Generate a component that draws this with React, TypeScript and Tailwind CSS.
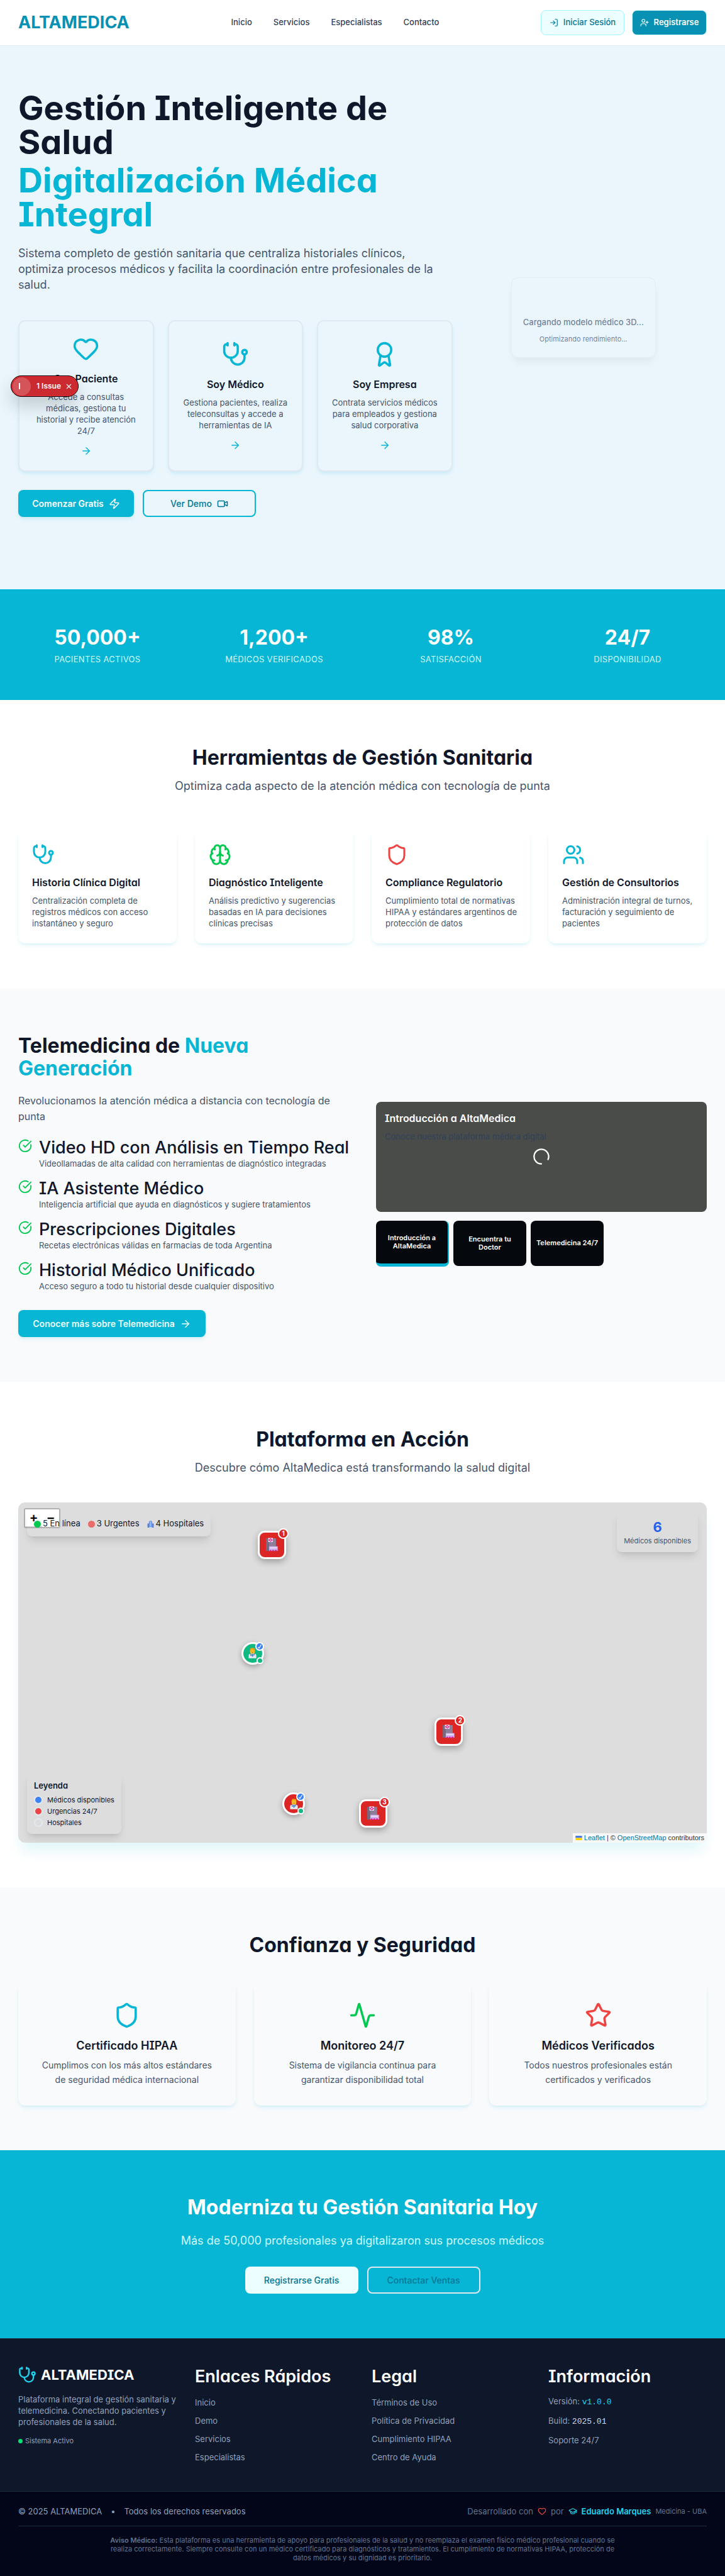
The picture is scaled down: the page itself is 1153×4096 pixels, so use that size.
import React from "react";
import {
  Activity,
  ArrowRight,
  Award,
  Brain,
  CircleCheckBig,
  GraduationCap,
  Heart,
  LogIn,
  Shield,
  Star,
  Stethoscope,
  UserPlus,
  Users,
  Video,
  X,
  Zap,
} from "lucide-react";

const display = "[font-feature-settings:'cv08','cv11']";
const softShadow = "shadow-[0_4px_6px_-1px_rgba(6,182,212,0.12),0_2px_4px_-2px_rgba(6,182,212,0.1)]";
const panelShadow = "shadow-[0_9px_14px_-3px_rgba(0,0,0,0.12),0_4px_6px_-4px_rgba(0,0,0,0.1)]";

function Header() {
  return (
    <header className="flex h-[73px] items-center justify-between border-b border-slate-200 bg-white px-[29px]">
      <a href="#inicio" className="text-[27px] font-bold leading-8 text-[#0891b2]">
        ALTAMEDICA
      </a>
      <nav className="flex gap-[34px] text-[13px] font-medium text-slate-700">
        <a href="#inicio">Inicio</a>
        <a href="#servicios">Servicios</a>
        <a href="#especialistas">Especialistas</a>
        <a href="#contacto">Contacto</a>
      </nav>
      <div className="flex gap-3">
        <button className="flex h-10 w-[133px] items-center justify-center gap-2 rounded-lg border border-cyan-200 bg-cyan-50 text-[13px] font-medium text-cyan-700">
          <LogIn size={14} />
          Iniciar Sesión
        </button>
        <button className="flex h-10 w-[119px] items-center justify-center gap-2 rounded-lg border border-cyan-100 bg-[#0891b2] text-[13px] font-semibold text-white">
          <UserPlus size={14} />
          Registrarse
        </button>
      </div>
    </header>
  );
}

const roles = [
  { icon: Heart, title: "Soy Paciente", text: "Accede a consultas médicas, gestiona tu historial y recibe atención 24/7" },
  { icon: Stethoscope, title: "Soy Médico", text: "Gestiona pacientes, realiza teleconsultas y accede a herramientas de IA" },
  { icon: Award, title: "Soy Empresa", text: "Contrata servicios médicos para empleados y gestiona salud corporativa" },
];

function Hero() {
  return (
    <section className="grid grid-cols-[1.76fr_1fr] items-center gap-3 bg-[#eaf6fc] px-[29px] py-[72px]">
      <div className="pb-[43px]">
        <h1 className={`text-[54px] font-bold leading-[54px] text-slate-900 ${display}`}>
          Gestión Inteligente de Salud
          <span className="mt-[7px] block text-[#06b6d4]">Digitalización Médica Integral</span>
        </h1>
        <p className="mt-[22px] text-[18px] leading-[25px] text-slate-600">
          Sistema completo de gestión sanitaria que centraliza historiales clínicos, optimiza procesos médicos y
          facilita la coordinación entre profesionales de la salud.
        </p>
        <div className="mt-11 grid grid-cols-3 gap-[22px]">
          {roles.map(({ icon: Icon, title, text }) => (
            <a
              key={title}
              href="#registro"
              className={`flex flex-col items-center justify-center rounded-[11px] border-2 border-slate-200 bg-[#eaf6fc] px-[18px] py-[22px] text-center ${softShadow}`}
            >
              <Icon size={43} className="text-[#06b6d4]" />
              <h3 className={`mt-[14px] text-[16px] font-semibold leading-[25px] text-slate-900 ${display}`}>{title}</h3>
              <p className="mt-[7px] text-[13px] leading-[18px] text-slate-600">{text}</p>
              <ArrowRight size={18} className="mt-[14px] text-[#06b6d4]" />
            </a>
          ))}
        </div>
        <div className="mt-[29px] flex gap-[14px]">
          <button
            className={`flex h-[43px] w-[184px] items-center justify-center gap-2 rounded-lg bg-[#06b6d4] text-[14px] font-semibold text-white ${softShadow}`}
          >
            Comenzar Gratis
            <Zap size={18} />
          </button>
          <button className="flex h-[43px] w-[180px] items-center justify-center gap-2 rounded-lg border-2 border-[#06b6d4] text-[14px] font-medium text-cyan-700">
            Ver Demo
            <Video size={18} />
          </button>
        </div>
      </div>
      <div className="flex justify-center">
        <div className="flex h-32 w-[230px] flex-col items-center justify-end rounded-[11px] border border-slate-200/70 bg-[#eaf6fc] pb-[22px] shadow-[0_9px_14px_-3px_rgba(0,0,0,0.06)]">
          <p className="text-[13px] font-medium leading-[18px] text-slate-500/90">Cargando modelo médico 3D...</p>
          <p className="mt-[11px] text-[11px] leading-[14px] text-slate-500/90">Optimizando rendimiento...</p>
        </div>
      </div>
    </section>
  );
}

const stats = [
  ["50,000+", "Pacientes activos"],
  ["1,200+", "Médicos verificados"],
  ["98%", "Satisfacción"],
  ["24/7", "Disponibilidad"],
];

function Stats() {
  return (
    <section className="grid grid-cols-4 gap-[29px] bg-[#06b6d4] px-[29px] pb-[56px] pt-[59px] text-center">
      {stats.map(([value, label]) => (
        <div key={label}>
          <div className={`text-[32px] font-bold leading-9 text-white ${display}`}>{value}</div>
          <div className="mt-[7px] text-[13px] uppercase leading-[18px] tracking-wide text-cyan-100">{label}</div>
        </div>
      ))}
    </section>
  );
}

function SectionTitle({ title, text }: { title: string; text?: string }) {
  return (
    <div className="text-center">
      <h2 className={`text-[32px] font-bold leading-[37px] text-slate-900 ${display}`}>{title}</h2>
      {text && <p className="mt-[14px] text-[18px] leading-[25px] text-slate-600">{text}</p>}
    </div>
  );
}

const tools = [
  { icon: Stethoscope, color: "text-[#06b6d4]", title: "Historia Clínica Digital", text: "Centralización completa de registros médicos con acceso instantáneo y seguro" },
  { icon: Brain, color: "text-green-500", title: "Diagnóstico Inteligente", text: "Análisis predictivo y sugerencias basadas en IA para decisiones clínicas precisas" },
  { icon: Shield, color: "text-[#ef4444]", title: "Compliance Regulatorio", text: "Cumplimiento total de normativas HIPAA y estándares argentinos de protección de datos" },
  { icon: Users, color: "text-[#06b6d4]", title: "Gestión de Consultorios", text: "Administración integral de turnos, facturación y seguimiento de pacientes" },
];

function Tools() {
  return (
    <section id="servicios" className="bg-white px-[29px] pb-[72px] pt-[73px]">
      <SectionTitle title="Herramientas de Gestión Sanitaria" text="Optimiza cada aspecto de la atención médica con tecnología de punta" />
      <div className="mt-[57px] grid grid-cols-4 gap-[29px]">
        {tools.map(({ icon: Icon, color, title, text }) => (
          <article key={title} className={`rounded-[11px] bg-white pb-[23px] pl-[22px] pr-[14px] pt-[22px] ${softShadow}`}>
            <Icon size={36} className={color} />
            <h3 className={`mt-[14px] text-[16px] font-semibold leading-[25px] text-slate-900 ${display}`}>{title}</h3>
            <p className="mt-[7px] text-[13px] leading-[18px] text-slate-600">{text}</p>
          </article>
        ))}
      </div>
    </section>
  );
}

const teleFeatures = [
  ["Video HD con Análisis en Tiempo Real", "Videollamadas de alta calidad con herramientas de diagnóstico integradas"],
  ["IA Asistente Médico", "Inteligencia artificial que ayuda en diagnósticos y sugiere tratamientos"],
  ["Prescripciones Digitales", "Recetas electrónicas válidas en farmacias de toda Argentina"],
  ["Historial Médico Unificado", "Acceso seguro a todo tu historial desde cualquier dispositivo"],
];

function Telemedicine() {
  return (
    <section className="grid grid-cols-2 items-center gap-[43px] bg-slate-50 px-[29px] pb-[71px] pt-[73px]">
      <div>
        <h2 className={`text-[32px] font-bold leading-9 text-slate-900 ${display}`}>
          Telemedicina de <span className="text-[#06b6d4]">Nueva Generación</span>
        </h2>
        <p className="mt-[21px] text-[16px] leading-[25px] text-slate-600">
          Revolucionamos la atención médica a distancia con tecnología de punta
        </p>
        <ul className="mt-[21px] flex flex-col gap-[15px]">
          {teleFeatures.map(([title, text]) => (
            <li key={title} className="flex items-start gap-[11px]">
              <CircleCheckBig size={22} className="mt-0.5 shrink-0 text-green-500" />
              <div>
                <h3 className={`whitespace-nowrap text-[27px] font-medium leading-8 text-slate-900 ${display}`}>{title}</h3>
                <p className="text-[13px] leading-[18px] text-slate-600">{text}</p>
              </div>
            </li>
          ))}
        </ul>
        <button
          className={`mt-[29px] flex h-[43px] w-[298px] items-center justify-center gap-2 rounded-lg bg-[#06b6d4] text-[14px] font-semibold text-cyan-50 ${softShadow}`}
        >
          Conocer más sobre Telemedicina
          <ArrowRight size={18} />
        </button>
      </div>
      <div className="pb-[6px]">
        <div className="relative h-[175px] rounded-lg bg-[#4a4c4a] px-[14px] pt-[14px]">
          <h3 className={`text-[16px] font-semibold leading-[25px] text-white ${display}`}>Introducción a AltaMedica</h3>
          <p className="mt-[7px] text-[13px] leading-[18px] text-slate-700">Conoce nuestra plataforma médica digital</p>
          <svg viewBox="0 0 28 28" className="absolute left-1/2 top-1/2 size-[26px] -translate-x-1/2 -translate-y-1/2" fill="none" stroke="#fff" strokeWidth="2.5" strokeLinecap="round">
            <path d="M14 26.5A12.5 12.5 0 1 1 25.4 19" />
          </svg>
        </div>
        <div className="mt-[14px] flex gap-[7px] text-[11px] font-semibold leading-[13px] text-white">
          <button className="h-[73px] w-[116px] rounded-lg border-b-[5px] border-r-2 border-[#06b6d4] bg-[#05080c] px-2">
            Introducción a AltaMedica
          </button>
          <button className="h-[72px] w-[116px] rounded-lg bg-[#05080c] px-5">Encuentra tu Doctor</button>
          <button className="h-[72px] w-[116px] whitespace-nowrap rounded-lg bg-[#05080c]">Telemedicina 24/7</button>
        </div>
      </div>
    </section>
  );
}

function HospitalMarker({ place, count }: { place: string; count: number }) {
  return (
    <div className={`absolute flex size-[45px] items-center justify-center rounded-[11px] border-[3px] border-white bg-[#dc2626] shadow-[0_4px_11px_rgba(0,0,0,0.3)] ${place}`}>
      <svg viewBox="0 0 20 24" className="h-[22px] w-[19px]" role="img" aria-label="Hospital">
        <rect x="0" y="1" width="17" height="22" rx="1" fill="#8d7f99" />
        <rect x="0" y="1" width="5" height="22" fill="#75697f" />
        <rect x="3.500" y="0.500" width="8" height="7" fill="#f5e6ff" />
        <path d="M4.500 4 7.500 1.800 10.500 4 7.500 6.200Z" fill="none" stroke="#e3197b" strokeWidth="1.300" />
        <rect x="5" y="15" width="15" height="8" fill="#cfb3ee" />
        <path d="M6.500 17.500h12" stroke="#f7efff" strokeWidth="1.400" />
        <path d="M6 22.300h3m1.500 0h3m1.500 0h3.500" stroke="#d61fa8" strokeWidth="1.800" />
      </svg>
      <span className="absolute -right-[7px] -top-[7px] flex size-[17px] items-center justify-center rounded-full border-2 border-white bg-[#dc2626] text-[10px] font-bold leading-none text-white">
        {count}
      </span>
    </div>
  );
}

function DoctorMarker({ place }: { place: string }) {
  return (
    <div className={`absolute flex size-9 items-center justify-center rounded-full border-[3px] border-white shadow-[0_3px_9px_rgba(0,0,0,0.3)] ${place}`}>
      <svg viewBox="0 0 14 18" className="h-[17px] w-[13px]" role="img" aria-label="Médico">
        <path d="M0.500 18v-4.500q0-3 3-3.500l3.500-.5 3.500.5q3 .5 3 3.500V18Z" fill="#e6ebf5" />
        <path d="M5 10h4v3l-2 3-2-3Z" fill="#5b8fd0" />
        <path d="M4 10v4M10 10v3" stroke="#4b5b78" strokeWidth="1" />
        <rect x="3" y="1" width="8" height="9" rx="3.500" fill="#fcc02e" />
        <path d="M3 5V3q0-3 4-3t4 3v1Q7 4 6 2.500 5 4 3 5Z" fill="#f0a30c" />
        <path d="M5.500 5.200v.8M8.500 5.200v.8M6 8h2" stroke="#7a4a10" strokeWidth=".8" />
      </svg>
      <span className="absolute -right-[3px] -top-[3px] flex size-[14px] items-center justify-center rounded-full border-2 border-white bg-[#3b82f6]">
        <svg viewBox="0 0 8 8" className="size-2" fill="none" stroke="#fff" strokeWidth="1.200">
          <path d="M1.500 5 3 6.800 6.500 1" />
        </svg>
      </span>
      <span className="absolute -bottom-0.5 -right-0.5 size-[11px] rounded-full border-2 border-white bg-[#10b981]" />
    </div>
  );
}

function PlatformMap() {
  return (
    <section className="bg-white px-[29px] pb-[71px] pt-[73px]">
      <SectionTitle title="Plataforma en Acción" text="Descubre cómo AltaMedica está transformando la salud digital" />
      <div className="relative mt-[43px] h-[541px] overflow-hidden rounded-[11px] bg-[#ddd] shadow-[0_18px_22px_-5px_rgba(6,182,212,0.12)]">
        <div className="absolute left-[9px] top-[9px] flex h-[32px] w-[58px] rounded-[3px] border-2 border-black/20 bg-clip-padding font-['Liberation_Sans',sans-serif] text-[20px] font-bold leading-[26px] text-black">
          <button aria-label="Acercar" className="w-1/2 border-b border-[#ccc] bg-white">+</button>
          <button aria-label="Alejar" className="w-1/2 bg-white">−</button>
        </div>

        <HospitalMarker place="left-[34.800%] top-[8.300%]" count={1} />
        <DoctorMarker place="left-[32.400%] top-[41%] bg-[#10b981]" />
        <HospitalMarker place="left-[60.500%] top-[63.200%]" count={2} />
        <DoctorMarker place="left-[38.400%] top-[85.300%] bg-[#dc2626]" />
        <HospitalMarker place="left-[49.500%] top-[87.200%]" count={3} />

        <div className={`absolute left-[14px] top-[14px] flex h-10 items-center gap-3 rounded-lg px-[11px] text-[13px] text-slate-900 ${panelShadow}`}>
          <span className="flex items-center gap-[3px]">
            <span className="size-[11px] rounded-full bg-green-500" />5 En línea
          </span>
          <span className="flex items-center gap-[3px]">
            <span className="size-[11px] rounded-full bg-[#ec6b6b]" />3 Urgentes
          </span>
          <span className="flex items-center gap-[3px]">
            <svg viewBox="0 0 12 12" className="size-[11px]">
              <path d="M3 12V3q0-3 3-3t3 3v9Z" fill="#6f9bea" />
              <path d="M1 5h2v7H1q-1-1 0-2-1-1 0-2-1-1 0-3ZM9 5h2q1 2 0 3 1 1 0 2 1 1 0 2H9Z" fill="#3f74e0" />
              <path d="M6 1.500V10M3.800 11.500h4.400" stroke="#c4d6f7" strokeWidth="1" />
            </svg>
            4 Hospitales
          </span>
        </div>

        <div className={`absolute right-[14px] top-[14px] rounded-lg p-[11px] text-center ${panelShadow}`}>
          <div className="text-[22px] font-bold leading-[29px] text-[#2563eb]">6</div>
          <div className="text-[11px] leading-[14px] text-slate-600">Médicos disponibles</div>
        </div>

        <div className={`absolute bottom-[14px] left-[14px] rounded-lg p-[11px] ${panelShadow}`}>
          <h4 className={`text-[13px] font-semibold leading-[18px] text-slate-900 ${display}`}>Leyenda</h4>
          <ul className="mt-[7px] flex flex-col gap-1 text-[11px] leading-[14px] text-slate-900">
            <li className="flex items-center gap-[7px]">
              <span className="size-[14px] rounded-full border-2 border-slate-200 bg-[#3b82f6]" />
              Médicos disponibles
            </li>
            <li className="flex items-center gap-[7px]">
              <span className="size-[14px] rounded-full border-2 border-slate-200 bg-[#ef4444]" />
              Urgencias 24/7
            </li>
            <li className="flex items-center gap-[7px]">
              <span className="size-[14px] rounded-full border-2 border-slate-200" />
              Hospitales
            </li>
          </ul>
        </div>

        <div className="absolute bottom-0 right-0 flex h-[15px] items-center gap-[3px] bg-white/80 px-1 font-['Liberation_Sans',sans-serif] text-[11px] text-[#333]">
          <svg viewBox="0 0 12 8" className="h-[7px] w-[11px]">
            <path fill="#4C7BE1" d="M0 0h12v4H0z" />
            <path fill="#FFD500" d="M0 4h12v4H0z" />
          </svg>
          <a href="#leaflet" className="text-[#0078a8]">Leaflet</a>
          <span>|</span>
          <span>©</span>
          <a href="#openstreetmap" className="text-[#0078a8]">OpenStreetMap</a>
          <span>contributors</span>
        </div>
      </div>
    </section>
  );
}

const trust = [
  { icon: Shield, color: "text-[#06b6d4]", title: "Certificado HIPAA", text: "Cumplimos con los más altos estándares de seguridad médica internacional" },
  { icon: Activity, color: "text-green-500", title: "Monitoreo 24/7", text: "Sistema de vigilancia continua para garantizar disponibilidad total" },
  { icon: Star, color: "text-[#ef4444]", title: "Médicos Verificados", text: "Todos nuestros profesionales están certificados y verificados" },
];

function Trust() {
  return (
    <section className="bg-slate-50 px-[29px] pb-[71px] pt-[73px]">
      <SectionTitle title="Confianza y Seguridad" />
      <div className="mt-[42px] grid grid-cols-3 gap-[29px]">
        {trust.map(({ icon: Icon, color, title, text }) => (
          <article key={title} className={`flex flex-col items-center rounded-[11px] bg-slate-50 px-[29px] py-[30px] text-center ${softShadow}`}>
            <Icon size={43} className={color} />
            <h3 className={`mt-[14px] text-[18px] font-semibold leading-[25px] text-slate-900 ${display}`}>{title}</h3>
            <p className="mt-[7px] text-[14px] leading-[23px] text-slate-600">{text}</p>
          </article>
        ))}
      </div>
    </section>
  );
}

function CallToAction() {
  return (
    <section className="bg-[#06b6d4] px-[29px] pb-[71px] pt-[72px] text-center">
      <h2 className={`text-[32px] font-bold leading-[37px] text-white ${display}`}>Moderniza tu Gestión Sanitaria Hoy</h2>
      <p className="mt-[22px] text-[18px] leading-[25px] text-cyan-100">
        Más de 50,000 profesionales ya digitalizaron sus procesos médicos
      </p>
      <div className="mt-[29px] flex justify-center gap-[14px] text-[14px] font-medium text-cyan-700">
        <button className="h-[43px] w-[180px] rounded-lg bg-cyan-50">Registrarse Gratis</button>
        <button className="h-[43px] w-[180px] rounded-lg border-2 border-slate-200">Contactar Ventas</button>
      </div>
    </section>
  );
}

function LinkColumn({ title, links }: { title: string; links: string[] }) {
  return (
    <div>
      <h3 className={`whitespace-nowrap text-[27px] font-semibold leading-[34px] text-white ${display}`}>{title}</h3>
      <ul className="mt-[13px] flex flex-col gap-[7px] text-[13px] leading-[22px] text-slate-400">
        {links.map((link) => (
          <li key={link}>
            <a href="#enlace">{link}</a>
          </li>
        ))}
      </ul>
    </div>
  );
}

function Footer() {
  return (
    <footer id="contacto">
      <div className="grid grid-cols-4 gap-[29px] border-t border-slate-800 bg-slate-900 px-[29px] py-[43px]">
        <div>
          <div className="flex items-center gap-[7px]">
            <Stethoscope size={29} className="text-[#22d3ee]" />
            <span className={`text-[22px] font-bold leading-[29px] text-white ${display}`}>ALTAMEDICA</span>
          </div>
          <p className="mt-[15px] text-[13px] leading-[18px] text-slate-400">
            Plataforma integral de gestión sanitaria y telemedicina. Conectando pacientes y profesionales de la salud.
          </p>
          <p className="mt-[14px] flex items-center gap-1 text-[11px] leading-[14px] text-slate-400">
            <span className="size-[7px] rounded-full bg-green-400" />
            Sistema Activo
          </p>
        </div>
        <LinkColumn title="Enlaces Rápidos" links={["Inicio", "Demo", "Servicios", "Especialistas"]} />
        <LinkColumn title="Legal" links={["Términos de Uso", "Política de Privacidad", "Cumplimiento HIPAA", "Centro de Ayuda"]} />
        <div>
          <h3 className={`text-[27px] font-semibold leading-[34px] text-white ${display}`}>Información</h3>
          <ul className="mt-[13px] flex flex-col gap-[11px] text-[13px] leading-[19px] text-slate-400">
            <li>
              Versión: <span className="font-['Liberation_Mono',monospace] text-[#22d3ee]">v1.0.0</span>
            </li>
            <li>
              Build: <span className="font-['Liberation_Mono',monospace] text-slate-300">2025.01</span>
            </li>
            <li>Soporte 24/7</li>
          </ul>
        </div>
      </div>
      <div className="border-t border-slate-800 bg-slate-950 px-[29px] pb-[22px] pt-[22px]">
        <div className="flex items-center justify-between text-[13px] leading-[18px]">
          <div className="flex gap-[14px] text-slate-400">
            <span>© 2025 ALTAMEDICA</span>
            <span>•</span>
            <span>Todos los derechos reservados</span>
          </div>
          <div className="flex items-center gap-[7px] text-slate-500">
            <span>Desarrollado con</span>
            <Heart size={14} className="text-[#ef4444]" />
            <span>por</span>
            <a href="#autor" className="flex items-center gap-[7px] font-semibold text-[#22d3ee]">
              <GraduationCap size={14} />
              Eduardo Marques
            </a>
            <span className="text-[11px]">Medicina - UBA</span>
          </div>
        </div>
        <div className="mt-[14px] border-t border-slate-800 pt-[15px]">
          <p className="mx-auto max-w-[807px] text-center text-[11px] leading-[14px] text-slate-500">
            <strong className="font-semibold">Aviso Médico:</strong> Esta plataforma es una herramienta de apoyo para
            profesionales de la salud y no reemplaza el examen físico médico profesional cuando se realiza correctamente.
            Siempre consulte con un médico certificado para diagnósticos y tratamientos. El cumplimiento de normativas
            HIPAA, protección de datos médicos y su dignidad es prioritario.
          </p>
        </div>
      </div>
    </footer>
  );
}

function IssueBadge() {
  return (
    <div className="absolute left-[17px] top-[597px] flex h-[34px] w-[108px] items-center rounded-full border border-black bg-[#ca2a30] p-0.5 text-white shadow-[0_14px_28px_rgba(0,0,0,0.18)] ring-1 ring-inset ring-red-500/60">
      <span className="flex size-[29px] items-center rounded-full bg-white/20 pl-[10px]">
        <span className="h-[10px] w-0.5 bg-white" />
      </span>
      <span className="ml-[9px] whitespace-nowrap text-[12px] font-semibold">1 Issue</span>
      <button aria-label="Cerrar" className="ml-1.5">
        <X size={13} />
      </button>
    </div>
  );
}

export default function App() {
  return (
    <div className="relative bg-white font-['Inter',sans-serif]">
      <Header />
      <main>
        <Hero />
        <Stats />
        <Tools />
        <Telemedicine />
        <PlatformMap />
        <Trust />
        <CallToAction />
      </main>
      <Footer />
      <IssueBadge />
    </div>
  );
}
